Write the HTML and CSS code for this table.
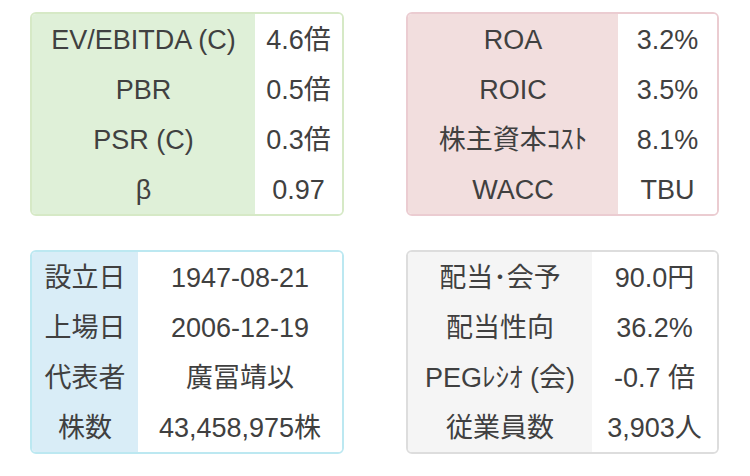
FILE: index.html
```html
<!DOCTYPE html>
<html lang="ja">
<head>
<meta charset="utf-8">
<link rel="stylesheet" href="styles.css">
</head>
<body>
<div class="grid">
  <div class="card card-green">
    <div class="lab">EV/EBITDA (C)</div><div class="val">4.6倍</div>
    <div class="lab">PBR</div><div class="val">0.5倍</div>
    <div class="lab">PSR (C)</div><div class="val">0.3倍</div>
    <div class="lab">β</div><div class="val">0.97</div>
  </div>
  <div class="card card-red">
    <div class="lab">ROA</div><div class="val">3.2%</div>
    <div class="lab">ROIC</div><div class="val">3.5%</div>
    <div class="lab">株主資本ｺｽﾄ</div><div class="val">8.1%</div>
    <div class="lab">WACC</div><div class="val">TBU</div>
  </div>
  <div class="card card-blue">
    <div class="lab">設立日</div><div class="val">1947-08-21</div>
    <div class="lab">上場日</div><div class="val">2006-12-19</div>
    <div class="lab">代表者</div><div class="val">廣冨靖以</div>
    <div class="lab">株数</div><div class="val">43,458,975株</div>
  </div>
  <div class="card card-gray">
    <div class="lab">配当･会予</div><div class="val">90.0円</div>
    <div class="lab">配当性向</div><div class="val">36.2%</div>
    <div class="lab">PEGﾚｼｵ (会)</div><div class="val">-0.7 倍</div>
    <div class="lab">従業員数</div><div class="val">3,903人</div>
  </div>
</div>
</body>
</html>
```

FILE: styles.css
```css
html, body {
  margin: 0;
  padding: 0;
  background: #ffffff;
}
body {
  font-family: "Liberation Sans", "Noto Sans CJK JP", sans-serif;
  color: #404040;
}
.grid {
  display: grid;
  grid-template-columns: 314px 313px;
  grid-template-rows: 204px 204px;
  column-gap: 62px;
  row-gap: 34px;
  padding: 12px 0 0 30px;
}
.card {
  display: grid;
  grid-template-rows: repeat(4, 50px);
  border: 2px solid;
  border-radius: 6px;
  overflow: hidden;
  background: #ffffff;
}
.lab, .val {
  font-size: 27px;
  line-height: 50px;
  padding-top: 1px;
  height: 50px;
  box-sizing: border-box;
  text-align: center;
  white-space: nowrap;
}
.val {
  background: #ffffff;
}
.card-green {
  grid-template-columns: 223px 87px;
  border-color: #d6e9c6;
}
.card-green .lab { background: #dff0d8; }
.card-red {
  grid-template-columns: 210px 99px;
  border-color: #ebccd1;
}
.card-red .lab { background: #f2dede; }
.card-blue {
  grid-template-columns: 106px 204px;
  border-color: #bce8f1;
}
.card-blue .lab { background: #d9edf7; }
.card-gray {
  grid-template-columns: 184px 125px;
  border-color: #dddddd;
}
.card-gray .lab { background: #f5f5f5; }
```
